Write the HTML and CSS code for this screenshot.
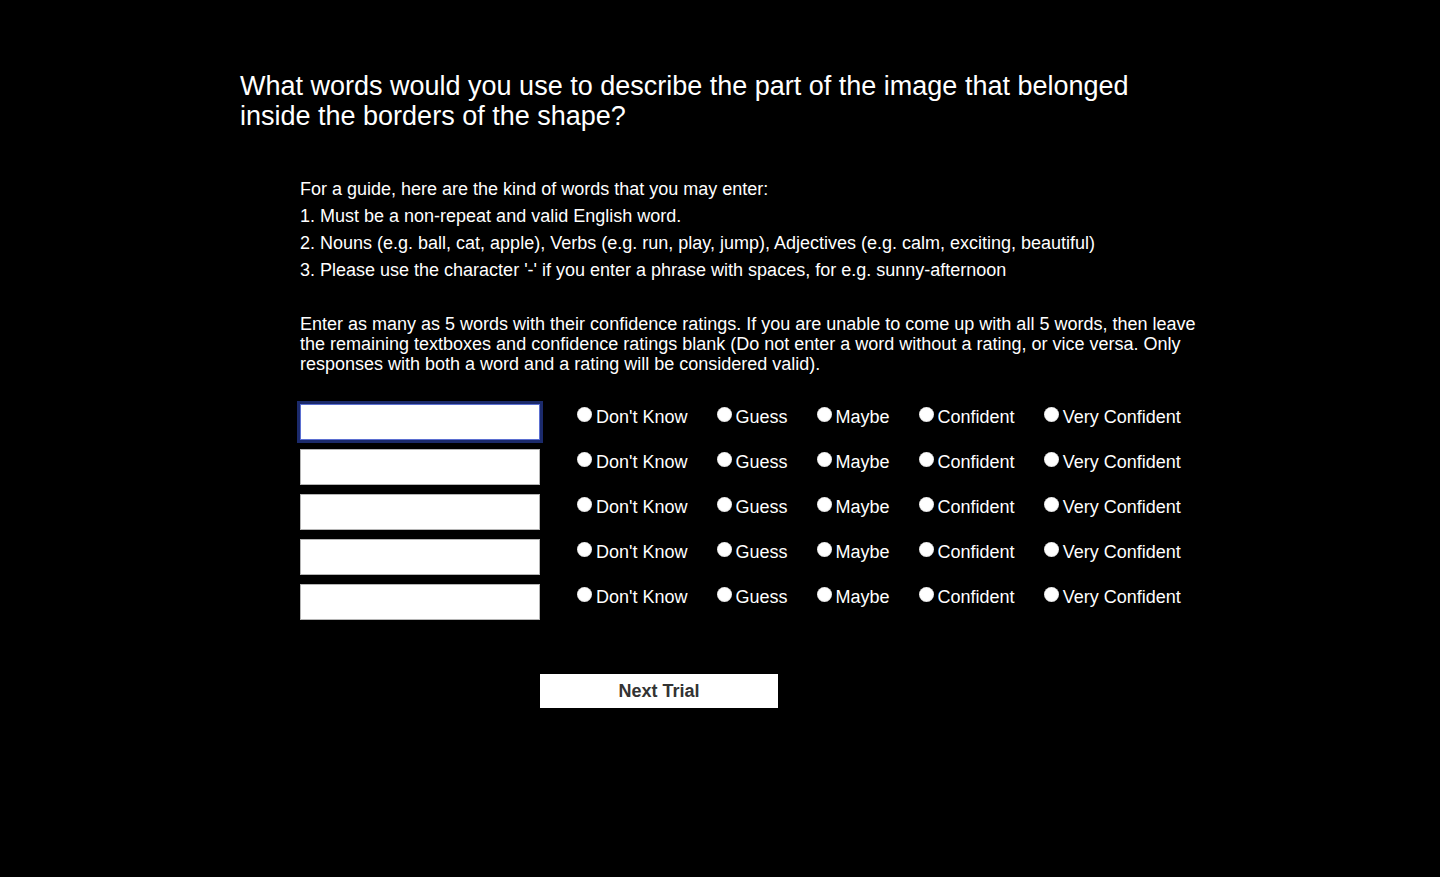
FILE: index.html
```html
<!DOCTYPE html>
<html>
<head>
<meta charset="utf-8">
<link rel="stylesheet" href="styles.css">
</head>
<body>
<div class="page">
  <h1 class="question">What words would you use to describe the part of the image that belonged inside the borders of the shape?</h1>
  <div class="content">
    <div class="guide">
      <div>For a guide, here are the kind of words that you may enter:</div>
      <div>1. Must be a non-repeat and valid English word.</div>
      <div>2. Nouns (e.g. ball, cat, apple), Verbs (e.g. run, play, jump), Adjectives (e.g. calm, exciting, beautiful)</div>
      <div>3. Please use the character '-' if you enter a phrase with spaces, for e.g. sunny-afternoon</div>
    </div>
    <p class="instructions">Enter as many as 5 words with their confidence ratings. If you are unable to come up with all 5 words, then leave the remaining textboxes and confidence ratings blank (Do not enter a word without a rating, or vice versa. Only responses with both a word and a rating will be considered valid).</p>
    <div class="rows">
      <div class="row">
        <input class="word focused" type="text">
        <div class="options">
          <label class="opt"><input type="radio" name="r1"><span>Don't Know</span></label>
          <label class="opt"><input type="radio" name="r1"><span>Guess</span></label>
          <label class="opt"><input type="radio" name="r1"><span>Maybe</span></label>
          <label class="opt"><input type="radio" name="r1"><span>Confident</span></label>
          <label class="opt"><input type="radio" name="r1"><span>Very Confident</span></label>
        </div>
      </div>
      <div class="row">
        <input class="word" type="text">
        <div class="options">
          <label class="opt"><input type="radio" name="r2"><span>Don't Know</span></label>
          <label class="opt"><input type="radio" name="r2"><span>Guess</span></label>
          <label class="opt"><input type="radio" name="r2"><span>Maybe</span></label>
          <label class="opt"><input type="radio" name="r2"><span>Confident</span></label>
          <label class="opt"><input type="radio" name="r2"><span>Very Confident</span></label>
        </div>
      </div>
      <div class="row">
        <input class="word" type="text">
        <div class="options">
          <label class="opt"><input type="radio" name="r3"><span>Don't Know</span></label>
          <label class="opt"><input type="radio" name="r3"><span>Guess</span></label>
          <label class="opt"><input type="radio" name="r3"><span>Maybe</span></label>
          <label class="opt"><input type="radio" name="r3"><span>Confident</span></label>
          <label class="opt"><input type="radio" name="r3"><span>Very Confident</span></label>
        </div>
      </div>
      <div class="row">
        <input class="word" type="text">
        <div class="options">
          <label class="opt"><input type="radio" name="r4"><span>Don't Know</span></label>
          <label class="opt"><input type="radio" name="r4"><span>Guess</span></label>
          <label class="opt"><input type="radio" name="r4"><span>Maybe</span></label>
          <label class="opt"><input type="radio" name="r4"><span>Confident</span></label>
          <label class="opt"><input type="radio" name="r4"><span>Very Confident</span></label>
        </div>
      </div>
      <div class="row">
        <input class="word" type="text">
        <div class="options">
          <label class="opt"><input type="radio" name="r5"><span>Don't Know</span></label>
          <label class="opt"><input type="radio" name="r5"><span>Guess</span></label>
          <label class="opt"><input type="radio" name="r5"><span>Maybe</span></label>
          <label class="opt"><input type="radio" name="r5"><span>Confident</span></label>
          <label class="opt"><input type="radio" name="r5"><span>Very Confident</span></label>
        </div>
      </div>
    </div>
    <button class="next" type="button">Next Trial</button>
  </div>
</div>
</body>
</html>
```

FILE: styles.css
```css
html, body {
  margin: 0;
  padding: 0;
  background: #000;
  color: #fff;
  font-family: "Liberation Sans", Arial, sans-serif;
}

.page {
  width: 960px;
  margin: 0 auto;
  padding-top: 71px;
}

.question {
  margin: 0;
  max-width: 920px;
  font-size: 27px;
  line-height: 30px;
  font-weight: normal;
}

.content {
  padding-left: 60px;
}

.guide {
  margin-top: 45px;
  font-size: 18px;
  line-height: 27px;
}

.instructions {
  margin: 30px 0 0 0;
  font-size: 18px;
  line-height: 20px;
}

.rows {
  margin-top: 30px;
  display: flex;
  flex-direction: column;
  gap: 9px;
}

.row {
  display: flex;
  align-items: flex-start;
}

.word {
  flex-shrink: 0;
  width: 240px;
  height: 36px;
  box-sizing: border-box;
  margin: 0;
  border: 1px solid #b5b5b5;
  background: #fff;
  padding: 0 4px;
  font-size: 17px;
}

.word.focused {
  border: 1px solid #5b6fd1;
  outline: 3px solid #1b2a6b;
  outline-offset: 0;
}

.options {
  display: flex;
  flex-shrink: 0;
  margin-left: 37px;
  padding-top: 3px;
}

.opt {
  display: flex;
  flex-shrink: 0;
  align-items: center;
  white-space: nowrap;
  margin-right: 29px;
  font-size: 18px;
  line-height: 20px;
}

.opt input {
  appearance: none;
  -webkit-appearance: none;
  flex-shrink: 0;
  width: 15px;
  height: 15px;
  margin: -5px 4px 0 0;
  border-radius: 50%;
  background: radial-gradient(circle at 50% 45%, #fff 55%, #e6e6e6 100%);
  border: none;
  box-shadow: inset 0 0 1px #888;
}

.next {
  display: block;
  margin: 54px 0 0 240px;
  width: 238px;
  height: 34px;
  background: #fff;
  border: none;
  color: #333;
  font-family: "Liberation Sans", Arial, sans-serif;
  font-size: 18px;
  font-weight: bold;
  padding: 0;
}
```
